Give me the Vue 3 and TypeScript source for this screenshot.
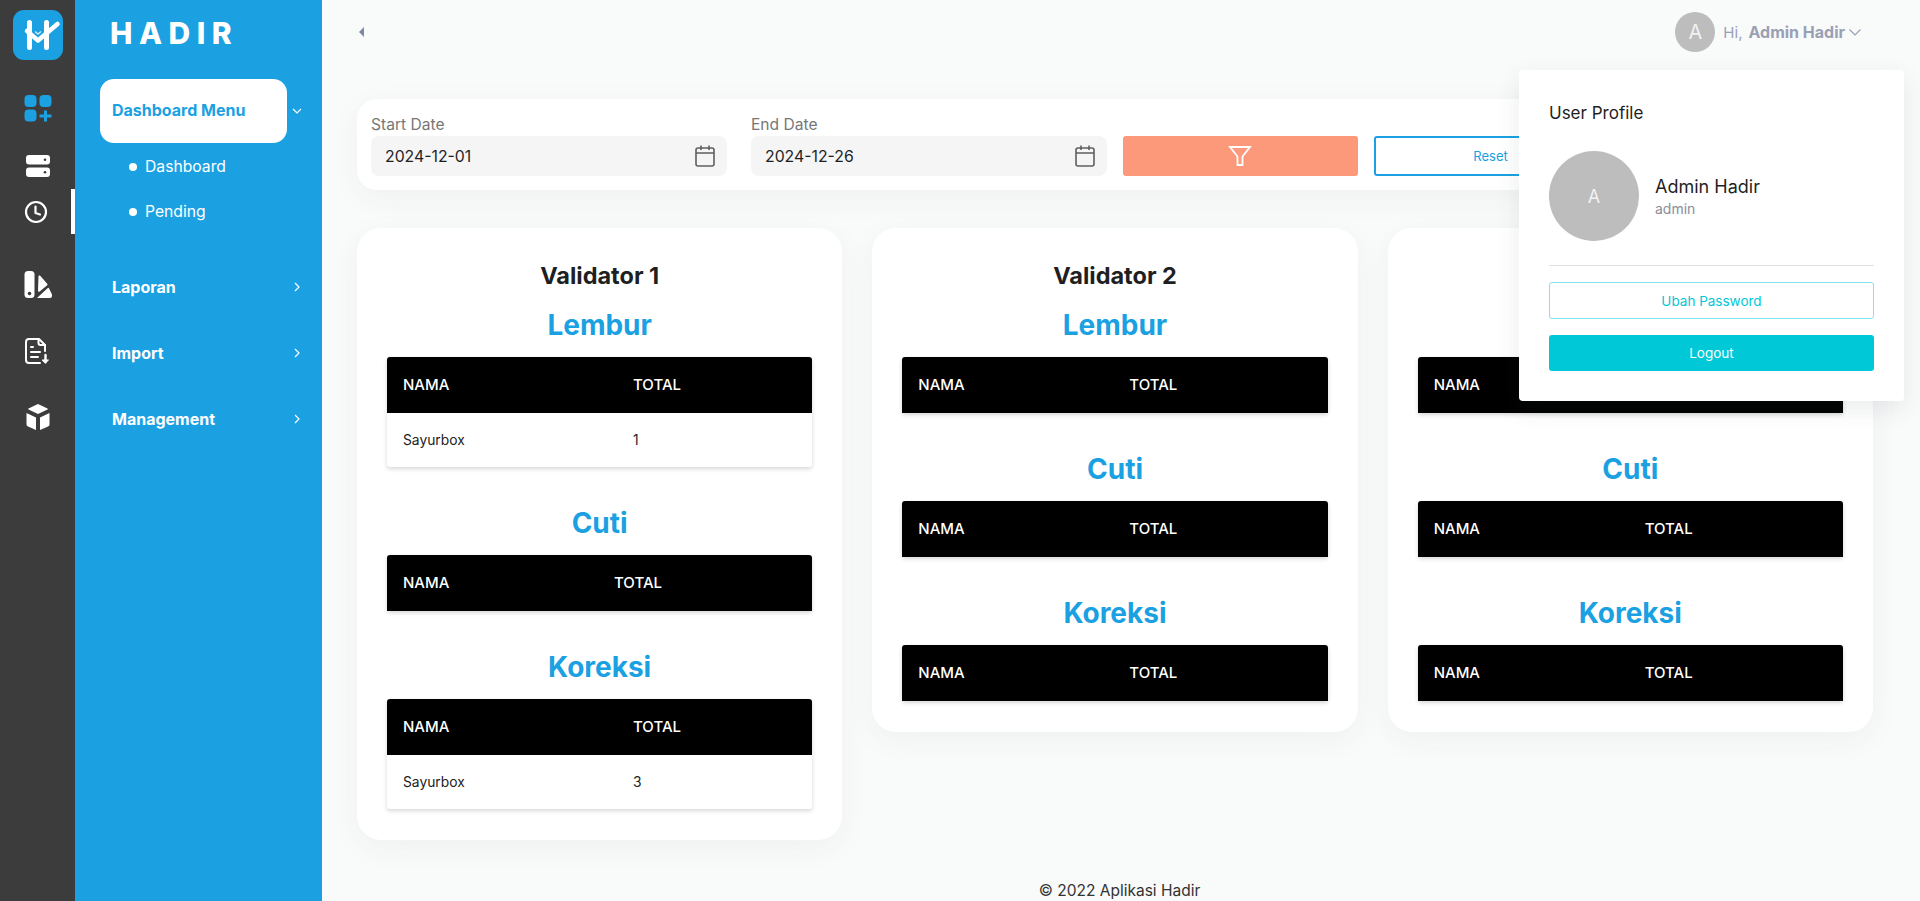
<script setup lang="ts">
interface Section {
  title: string;
  rows: { name: string; total: number }[];
}

interface Validator {
  name: string;
  sections: Section[];
}

const validators: Validator[] = [
  {
    name: "Validator 1",
    sections: [
      { title: "Lembur", rows: [{ name: "Sayurbox", total: 1 }] },
      { title: "Cuti", rows: [] },
      { title: "Koreksi", rows: [{ name: "Sayurbox", total: 3 }] },
    ],
  },
  {
    name: "Validator 2",
    sections: [
      { title: "Lembur", rows: [] },
      { title: "Cuti", rows: [] },
      { title: "Koreksi", rows: [] },
    ],
  },
  {
    name: "Validator 3",
    sections: [
      { title: "Lembur", rows: [] },
      { title: "Cuti", rows: [] },
      { title: "Koreksi", rows: [] },
    ],
  },
];

const menus = ["Laporan", "Import", "Management"];
</script>

<template>
  <div class="layout">
    <aside class="rail">
      <div class="logo">
        <svg width="50" height="50" viewBox="0 0 50 50">
          <rect width="50" height="50" rx="11" fill="#1ba1e2" />
          <path d="M16.500 12.500v25M33.500 12.500v25" stroke="#fff" stroke-width="5" stroke-linecap="round" fill="none" />
          <path d="M22 21.500l3 2.500 3-2.500" stroke="#cfeaf8" stroke-width="1.500" fill="none" />
          <path d="M14 21l11 9.500L44.500 14" stroke="#fff" stroke-width="4.500" stroke-linecap="round" stroke-linejoin="round" fill="none" />
        </svg>
      </div>
      <div class="rail-icon grid-icon">
        <svg width="28" height="28" viewBox="0 0 28 28" fill="#1ba1e2">
          <rect x="0.5" y="1" width="12" height="12" rx="4" />
          <rect x="15.5" y="1" width="12" height="12" rx="4" />
          <rect x="0.5" y="15.5" width="12" height="12" rx="4" />
          <path d="M20 16.500h3v4h4.500v3H23v4h-3v-4h-4.500v-3H20z" />
        </svg>
      </div>
      <div class="rail-icon server-icon">
        <svg width="26" height="26" viewBox="0 0 26 26">
          <rect x="1" y="2" width="24" height="9.500" rx="3" fill="#fff" />
          <rect x="1" y="14.500" width="24" height="9.500" rx="3" fill="#fff" />
          <circle cx="20" cy="6.800" r="1.300" fill="#3c3c3c" />
          <circle cx="20" cy="19.300" r="1.300" fill="#3c3c3c" />
        </svg>
      </div>
      <div class="rail-icon active">
        <svg width="26" height="26" viewBox="0 0 26 26" fill="none" stroke="#fff" stroke-width="2.200" stroke-linecap="round" stroke-linejoin="round">
          <circle cx="13" cy="13" r="10" />
          <path d="M12.500 7.500v6.500l4.500 1.500" />
        </svg>
      </div>
      <div class="rail-icon report-icon">
        <svg width="28" height="28" viewBox="0 0 28 28" fill="#fff">
          <rect x="0.500" y="1" width="10" height="27" rx="3.500" />
          <circle cx="5.500" cy="23.500" r="1.800" fill="#3c3c3c" />
          <path d="M14.500 6.500a1 1 0 0 1 1.700-.7l7 8a1 1 0 0 1 0 1.400l-7.500 6.300a1 1 0 0 1-1.700-.8z" />
          <path d="M13 28l10.500-9.800a1 1 0 0 1 1.600.2l2.900 6.100V26a2 2 0 0 1-2 2z" />
        </svg>
      </div>
      <div class="rail-icon import-icon">
        <svg width="26" height="28" viewBox="0 0 26 28" fill="none" stroke="#fff" stroke-width="2" stroke-linecap="round" stroke-linejoin="round">
          <path d="M20 14V8l-6-6H4a3 3 0 0 0-3 3v18a3 3 0 0 0 3 3h11" />
          <path d="M13.500 2.500V6a2 2 0 0 0 2 2H20" />
          <path d="M6 10h2M6 15h9M6 20h7" />
          <path d="M20.500 18v7" stroke-width="2.400" />
          <path d="M17.500 23h6l-3 3z" fill="#fff" stroke-width="1" />
        </svg>
      </div>
      <div class="rail-icon box-icon">
        <svg width="26" height="28" viewBox="0 0 26 28" fill="#fff">
          <path d="M13 1l9.500 4.500a.6.6 0 0 1 0 1L13 11 3.500 6.500a.6.6 0 0 1 0-1z" />
          <path d="M1.500 10l9.500 4.500v12.500l-8-3.500a2.500 2.500 0 0 1-1.500-2.300z" />
          <path d="M24.500 10L15 14.500v12.500l8-3.500a2.500 2.500 0 0 0 1.500-2.300z" />
        </svg>
      </div>
    </aside>

    <nav class="sidebar">
      <div class="brand">HADIR</div>
      <div class="menu-open">
        <div class="menu-pill">Dashboard Menu</div>
        <svg class="chev" width="12" height="12" viewBox="0 0 12 12" fill="none" stroke="#fff" stroke-width="1.200">
          <path d="M2 4l4 4 4-4" />
        </svg>
      </div>
      <ul class="submenu">
        <li>Dashboard</li>
        <li>Pending</li>
      </ul>
      <div v-for="menu in menus" :key="menu" class="menu-item">
        <span>{{ menu }}</span>
        <svg width="12" height="12" viewBox="0 0 12 12" fill="none" stroke="#fff" stroke-width="1.200">
          <path d="M4 2l4 4-4 4" />
        </svg>
      </div>
    </nav>

    <main class="main">
      <header class="topbar">
        <span class="toggle"></span>
        <div class="user">
          <span class="avatar">A</span>
          <span class="hi">Hi,</span>
          <span class="user-name">Admin Hadir</span>
          <svg width="14" height="14" viewBox="0 0 14 14" fill="none" stroke="#9aa0b4" stroke-width="1.200">
            <path d="M1.500 4.500L7 10l5.500-5.500" />
          </svg>
        </div>
      </header>

      <section class="filter">
        <div class="field">
          <label>Start Date</label>
          <div class="input">
            <span>2024-12-01</span>
            <svg width="22" height="24" viewBox="0 0 22 24" fill="none" stroke="#5f5f5f" stroke-width="1.600">
              <rect x="2" y="4" width="18" height="18" rx="2" />
              <path d="M2 9h18M7 1.500V6M15 1.500V6" />
            </svg>
          </div>
        </div>
        <div class="field">
          <label>End Date</label>
          <div class="input">
            <span>2024-12-26</span>
            <svg width="22" height="24" viewBox="0 0 22 24" fill="none" stroke="#5f5f5f" stroke-width="1.600">
              <rect x="2" y="4" width="18" height="18" rx="2" />
              <path d="M2 9h18M7 1.500V6M15 1.500V6" />
            </svg>
          </div>
        </div>
        <button class="btn-filter">
          <svg width="24" height="22" viewBox="0 0 24 22" fill="none" stroke="#fff" stroke-width="1.800" stroke-linejoin="miter">
            <path d="M2 2h20l-7.500 9.500V20h-5v-8.500z" />
          </svg>
        </button>
        <button class="btn-reset">Reset</button>
      </section>

      <section class="cards">
        <article v-for="v in validators" :key="v.name" class="card">
          <h2>{{ v.name }}</h2>
          <div v-for="s in v.sections" :key="s.title" class="block">
            <h3>{{ s.title }}</h3>
            <table :class="{ filled: s.rows.length > 0 }">
              <thead>
                <tr>
                  <th>NAMA</th>
                  <th>TOTAL</th>
                </tr>
              </thead>
              <tbody>
                <tr v-for="r in s.rows" :key="r.name">
                  <td>{{ r.name }}</td>
                  <td>{{ r.total }}</td>
                </tr>
              </tbody>
            </table>
          </div>
        </article>
      </section>

      <footer class="footer">© 2022 Aplikasi Hadir</footer>

      <div class="profile">
        <h4>User Profile</h4>
        <div class="profile-head">
          <span class="avatar-lg">A</span>
          <div class="profile-text">
            <div class="profile-name">Admin Hadir</div>
            <div class="profile-role">admin</div>
          </div>
        </div>
        <button class="btn-outline">Ubah Password</button>
        <button class="btn-solid">Logout</button>
      </div>
    </main>
  </div>
</template>

<style>
html,
body {
  margin: 0;
  overflow: hidden;
}
</style>

<style scoped>
.layout {
  display: flex;
  height: 901px;
  overflow: hidden;
  font-family: "Inter", "Noto Sans", sans-serif;
  color: #1f1f1f;
}

.rail {
  width: 75px;
  flex: none;
  background: #3c3c3c;
  display: flex;
  flex-direction: column;
  align-items: center;
}

.logo {
  margin: 10px 0 0;
  height: 50px;
}

.rail-icon {
  width: 75px;
  height: 45px;
  display: flex;
  align-items: center;
  justify-content: center;
}

.grid-icon {
  margin-top: 25px;
}

.server-icon {
  margin-top: 13px;
}

.rail-icon.active {
  margin-top: 1px;
  border-right: 4px solid #fff;
  box-sizing: border-box;
}

.report-icon {
  margin-top: 27px;
}

.import-icon {
  margin-top: 22px;
}

.box-icon {
  margin-top: 21px;
}

.sidebar {
  width: 247px;
  flex: none;
  background: #1ba1e2;
  color: #fff;
  box-sizing: border-box;
  padding-left: 25px;
}

.brand {
  font-size: 30px;
  font-weight: 800;
  letter-spacing: 6.500px;
  line-height: 34px;
  padding: 16px 0 0 10px;
}

.menu-open {
  display: flex;
  align-items: center;
  margin-top: 29px;
}

.menu-pill {
  width: 187px;
  height: 64px;
  background: #fff;
  color: #1ba1e2;
  border-radius: 14px;
  font-size: 16px;
  font-weight: 700;
  line-height: 63px;
  box-sizing: border-box;
  padding-left: 12px;
}

.chev {
  margin-left: 4px;
}

.submenu {
  list-style: none;
  margin: 0;
  padding: 1px 0 0 45px;
}

.submenu li {
  font-size: 15.700px;
  line-height: 45px;
  position: relative;
}

.submenu li::before {
  content: "";
  position: absolute;
  left: -16px;
  top: 19px;
  width: 8px;
  height: 8px;
  border-radius: 50%;
  background: #fff;
}

.menu-item {
  display: flex;
  align-items: center;
  justify-content: space-between;
  width: 203px;
  height: 66px;
  padding-left: 12px;
  box-sizing: border-box;
  font-size: 16px;
  font-weight: 700;
}

.submenu + .menu-item {
  margin-top: 20px;
}

.main {
  flex: 1;
  position: relative;
  background: #f9fafa;
  min-width: 0;
  padding: 0 47px 0 35px;
}

.topbar {
  height: 64px;
  display: flex;
  align-items: center;
  justify-content: space-between;
}

.toggle {
  width: 0;
  height: 0;
  margin-left: 2px;
  border-style: solid;
  border-width: 5px 5px 5px 0;
  border-color: transparent #7a8aa0 transparent transparent;
}

.user {
  display: flex;
  align-items: center;
  font-size: 16px;
  color: #9aa0b4;
  margin-right: 11px;
}

.avatar {
  width: 40px;
  height: 40px;
  border-radius: 50%;
  background: #bdbdbd;
  color: #f2f2f2;
  display: flex;
  align-items: center;
  justify-content: center;
  font-size: 20px;
  margin-right: 8px;
}

.hi {
  margin-right: 6px;
  font-size: 15px;
}

.user-name {
  font-weight: 700;
  margin-right: 3px;
}

.filter {
  margin-top: 35px;
  height: 91px;
  background: #fff;
  border-radius: 20px;
  box-shadow: 0 8px 30px rgba(60, 70, 80, 0.05);
  display: flex;
  align-items: flex-end;
  box-sizing: border-box;
  padding: 0 14px 14px;
}

.field {
  width: 356px;
  margin-right: 24px;
}

.field + .field {
  margin-right: 16px;
}

.field label {
  display: block;
  font-size: 15.600px;
  color: #777;
  line-height: 20px;
  margin-bottom: 1px;
}

.input {
  height: 40px;
  background: #f5f5f5;
  border-radius: 8px;
  display: flex;
  align-items: center;
  justify-content: space-between;
  padding: 0 11px 0 14px;
  font-size: 15.800px;
  color: #1f1f1f;
}

button {
  font-family: inherit;
  cursor: pointer;
}

.btn-filter {
  width: 235px;
  height: 40px;
  border: none;
  border-radius: 3px;
  background: #fd997b;
  display: flex;
  align-items: center;
  justify-content: center;
  margin-right: 16px;
  padding: 0 2px 0 0;
}

.btn-reset {
  width: 235px;
  height: 40px;
  background: #fff;
  border: 2px solid #1ba1e2;
  border-radius: 3px;
  color: #1ba1e2;
  font-size: 13px;
  padding: 0 8px 0 6px;
}

.cards {
  display: flex;
  gap: 30px;
  align-items: flex-start;
  margin-top: 38px;
}

.card {
  flex: 1;
  min-width: 0;
  background: #fff;
  border-radius: 24px;
  box-shadow: 0 8px 30px rgba(60, 70, 80, 0.05);
  padding: 30px 30px 31px;
}

.card h2 {
  margin: 0 0 10px;
  text-align: center;
  font-size: 23.500px;
  font-weight: 700;
  line-height: 36px;
  color: #1f1f1f;
}

.block {
  margin-bottom: 35px;
}

.block:last-child {
  margin-bottom: 0;
}

.block h3 {
  margin: 0 0 11px;
  text-align: center;
  font-size: 28px;
  font-weight: 700;
  line-height: 42px;
  color: #1ba1e2;
}

table {
  width: 100%;
  table-layout: fixed;
  border-collapse: separate;
  border-spacing: 0;
  border-radius: 3px;
  box-shadow: 0 2px 4px rgba(0, 0, 0, 0.16);
  font-size: 13.800px;
}

th {
  background: #000;
  color: #fff;
  text-align: left;
  height: 56px;
  padding: 0 16px 2px;
  font-size: 15px;
  font-weight: 500;
  box-sizing: border-box;
}

th:first-child {
  border-top-left-radius: 3px;
}

th:last-child {
  border-top-right-radius: 3px;
}

table.filled th:first-child {
  width: 230px;
}

table:not(.filled) th:first-child {
  width: 211px;
}

td {
  height: 54px;
  padding: 0 16px;
  color: #222;
}

.footer {
  position: absolute;
  left: 0;
  right: 3px;
  top: 881px;
  text-align: center;
  font-size: 15.500px;
  color: #333;
}

.profile {
  position: absolute;
  left: 1197px;
  top: 70px;
  width: 385px;
  height: 331px;
  box-sizing: border-box;
  background: #fff;
  border-radius: 4px;
  box-shadow: 0 8px 24px rgba(60, 70, 80, 0.1);
  padding: 30px;
  display: flex;
  flex-direction: column;
}

.profile h4 {
  margin: 1px 0 0;
  font-size: 17px;
  font-weight: 400;
  line-height: 24px;
}

.profile-head {
  display: flex;
  align-items: center;
  gap: 16px;
  margin-top: 26px;
  padding-bottom: 24px;
  border-bottom: 1px solid #e0e0e0;
}

.avatar-lg {
  width: 90px;
  height: 90px;
  border-radius: 50%;
  background: #bdbdbd;
  color: #f2f2f2;
  display: flex;
  align-items: center;
  justify-content: center;
  font-size: 18px;
}

.profile-name {
  font-size: 18px;
  margin-bottom: 3px;
}

.profile-role {
  font-size: 14px;
  color: #8a8d99;
}

.btn-outline {
  margin-top: 16px;
  height: 37px;
  background: #fff;
  border: 1px solid #7ee4ee;
  border-radius: 3px;
  color: #00c8d7;
  font-size: 13.500px;
}

.btn-solid {
  margin-top: 16px;
  height: 36px;
  background: #00c8d7;
  border: none;
  border-radius: 3px;
  color: #fff;
  font-size: 13.500px;
}
</style>
